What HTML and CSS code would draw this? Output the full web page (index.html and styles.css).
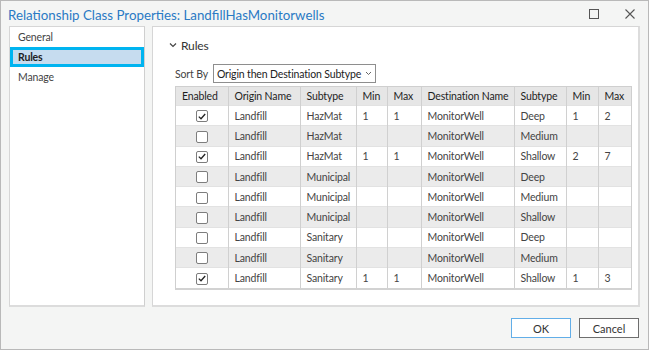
FILE: index.html
```html
<!DOCTYPE html>
<html>
<head>
    <link rel="stylesheet" href="styles.css">
</head>
<body>
    <div class="window">
        <div class="titlebar">
            <span class="title">Relationship Class Properties: LandfillHasMonitorwells</span>
            <div class="win-buttons">
                <svg width="10" height="10" viewBox="0 0 10 10"><rect x="0.5" y="0.5" width="9" height="9" fill="none" stroke="#555" stroke-width="1"/></svg>
                <svg width="10" height="10" viewBox="0 0 10 10"><path d="M0.5 0.5 L9.5 9.5 M9.5 0.5 L0.5 9.5" stroke="#555" stroke-width="1.1"/></svg>
            </div>
        </div>

        <div class="main">
            <div class="nav">
                <div class="nav-item">General</div>
                <div class="nav-item active">Rules</div>
                <div class="nav-item">Manage</div>
            </div>

            <div class="page">
                <div class="section-head">
                    <svg width="8" height="6" viewBox="0 0 8 6"><path d="M1 1.5 L4 4.5 L7 1.5" fill="none" stroke="#444" stroke-width="1.2"/></svg>
                    <span>Rules</span>
                </div>
                <div class="sort-row">
                    <span>Sort By</span>
                    <div class="select">
                        <span>Origin then Destination Subtype</span>
                        <svg width="7" height="5" viewBox="0 0 7 5"><path d="M1 1 L3.5 3.5 L6 1" fill="none" stroke="#666" stroke-width="1"/></svg>
                    </div>
                </div>

                <div class="grid">
                    <table>
                        <colgroup>
                            <col style="width:52px"><col style="width:72px"><col style="width:56px"><col style="width:31px"><col style="width:34px">
                            <col style="width:93px"><col style="width:52px"><col style="width:32px"><col style="width:33px">
                        </colgroup>
                        <thead>
                            <tr>
                                <th>Enabled</th><th>Origin Name</th><th>Subtype</th><th>Min</th><th>Max</th>
                                <th>Destination Name</th><th>Subtype</th><th>Min</th><th>Max</th>
                            </tr>
                        </thead>
                        <tbody id="rules"></tbody>
                    </table>
                </div>
            </div>
        </div>

        <div class="footer">
            <button class="btn ok">OK</button>
            <button class="btn">Cancel</button>
        </div>
    </div>

    <script>
        const rules = [
            [true,  'HazMat',    '1', '1', 'Deep',    '1', '2'],
            [false, 'HazMat',    '',  '',  'Medium',  '',  ''],
            [true,  'HazMat',    '1', '1', 'Shallow', '2', '7'],
            [false, 'Municipal', '',  '',  'Deep',    '',  ''],
            [false, 'Municipal', '',  '',  'Medium',  '',  ''],
            [false, 'Municipal', '',  '',  'Shallow', '',  ''],
            [false, 'Sanitary',  '',  '',  'Deep',    '',  ''],
            [false, 'Sanitary',  '',  '',  'Medium',  '',  ''],
            [true,  'Sanitary',  '1', '1', 'Shallow', '1', '3']
        ];
        const check = '<svg width="8" height="7" viewBox="0 0 8 7"><path d="M0.8 3.6 L3 5.8 L7.2 1" fill="none" stroke="#222" stroke-width="1.3"/></svg>';
        const body = document.getElementById('rules');
        body.innerHTML = rules.map(r => `
            <tr>
                <td class="center"><span class="checkbox">${r[0] ? check : ''}</span></td>
                <td>Landfill</td><td>${r[1]}</td><td>${r[2]}</td><td>${r[3]}</td>
                <td>MonitorWell</td><td>${r[4]}</td><td>${r[5]}</td><td>${r[6]}</td>
            </tr>`).join('');
    </script>
</body>
</html>
```

FILE: styles.css
```css
html, body {
    margin: 0;
    padding: 0;
}
body {
    font-family: Lato, "Noto Sans", sans-serif;
    font-size: 10.5px;
    letter-spacing: -0.15px;
    color: #333;
}
.window {
    width: 649px;
    height: 350px;
    box-sizing: border-box;
    border: 1px solid #b9b9b9;
    background: #f4f5f4;
    display: flex;
    flex-direction: column;
}
.titlebar {
    height: 25px;
    display: flex;
    align-items: center;
    justify-content: space-between;
    padding: 0 13px 0 7px;
}
.title {
    color: #2a7ac4;
    font-size: 13.3px;
    letter-spacing: 0;
    padding-top: 2px;
}
.win-buttons {
    display: flex;
    gap: 26px;
    align-items: center;
}
.main {
    display: flex;
    gap: 7px;
    padding: 0 8px;
    height: 281px;
}
.nav {
    width: 137px;
    box-sizing: border-box;
    background: #fff;
    border: 1px solid #d6d6d6;
    border-right-color: #cfcfcf;
    border-bottom: 2px solid #dcdcdc;
}
.nav-item {
    height: 20px;
    line-height: 20px;
    padding-left: 8px;
    color: #444;
}
.nav-item.active {
    background: #c6dcef;
    border: 3px solid #00b4f0;
    height: 14px;
    line-height: 14px;
    padding-left: 5px;
    font-weight: bold;
    color: #222;
}
.page {
    flex: 1;
    background: #fff;
    border: 1px solid #d6d6d6;
    border-bottom: 2px solid #dcdcdc;
    border-right: 2px solid #dcdcdc;
    padding: 10px 6px 0 22px;
}
.section-head {
    display: flex;
    align-items: center;
    gap: 4px;
    margin-left: -6px;
    font-size: 12px;
    color: #333;
    height: 16px;
}
.sort-row {
    display: flex;
    align-items: center;
    gap: 5px;
    margin-top: 11px;
    color: #444;
}
.select {
    display: flex;
    align-items: center;
    gap: 4px;
    height: 17px;
    border: 1px solid #8e8e8e;
    padding: 0 3px 0 3px;
    color: #222;
    background: #fff;
}
.grid {
    margin-top: 3px;
    width: 455px;
    border: 1px solid #cfcfcf;
    border-bottom: 2px solid #d2d2d2;
}
table {
    table-layout: fixed;
    border-collapse: collapse;
    width: 455px;
}
th, td {
    text-align: left;
    padding: 0 0 0 6px;
    border-left: 1px solid #d0d0d0;
    white-space: nowrap;
    overflow: hidden;
}
th:first-child, td:first-child {
    border-left: none;
}
th {
    height: 18px;
    background: #e6e6e6;
    font-weight: normal;
    color: #1e1e1e;
}
td {
    height: 19.3px;
    color: #444;
    border-top: 1px solid #e2e2e2;
}
tbody tr:nth-child(even) td {
    background: #ebebeb;
}
td.center {
    text-align: center;
    padding: 0;
}
.checkbox {
    display: inline-flex;
    align-items: center;
    justify-content: center;
    width: 10px;
    height: 10px;
    border: 1px solid #7d7d7d;
    border-radius: 2px;
    background: #fff;
    vertical-align: middle;
}
.footer {
    flex: 1;
    display: flex;
    justify-content: flex-end;
    align-items: center;
    gap: 8px;
    padding: 0 9px 0 0;
}
.btn {
    width: 60px;
    height: 20px;
    font-family: inherit;
    font-size: 11px;
    color: #333;
    background: #fff;
    border: 1px solid #6e6e6e;
    padding: 0;
}
.btn.ok {
    border-color: #62aee8;
}
```
